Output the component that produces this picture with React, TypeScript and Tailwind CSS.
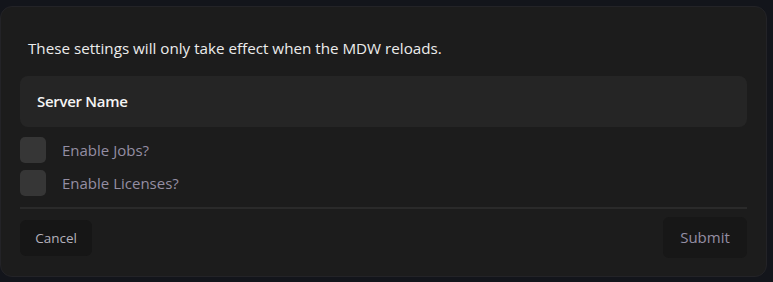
import React from "react";

export default function App() {
  return (
    <div className="w-[773px] h-[282px] bg-[#13151b] overflow-hidden" style={{ fontFamily: '"Open Sans", "Noto Sans", sans-serif' }}>
      <div className="mt-[6px] w-[767px] h-[271px] rounded-[12px] bg-[#1c1c1c] border border-[#232327] px-[19px] pt-[32px] flex flex-col">
        <p className="ml-[8px] text-[15.2px] leading-[19px] text-[#ececec]">These settings will only take effect when the MDW reloads.</p>
        <div className="mt-[18px] h-[51px] rounded-[8px] bg-[#252525] flex items-center pl-[17px]">
          <span className="text-[15px] font-semibold text-[#f4f4f4] tracking-[-0.3px]">Server Name</span>
        </div>
        <div className="mt-[10px] flex flex-col gap-[7px]">
          <label className="flex items-center gap-[16px]">
            <span className="w-[26px] h-[26px] rounded-[5px] bg-[#363636]" />
            <span className="text-[15px] text-[#948ea3]">Enable Jobs?</span>
          </label>
          <label className="flex items-center gap-[16px]">
            <span className="w-[26px] h-[26px] rounded-[5px] bg-[#363636]" />
            <span className="text-[15px] text-[#948ea3]">Enable Licenses?</span>
          </label>
        </div>
        <div className="mt-[11px] h-[2px] bg-[#2a2a2a]" />
        <div className="mt-[8px] flex items-start justify-between">
          <button className="mt-[3px] h-[36px] w-[72px] rounded-[6px] bg-[#161616] text-[13.5px] text-[#b3b0bb]">Cancel</button>
          <button className="h-[41px] w-[84px] rounded-[6px] bg-[#171717] text-[15px] text-[#948ea3]">Submit</button>
        </div>
      </div>
    </div>
  );
}
